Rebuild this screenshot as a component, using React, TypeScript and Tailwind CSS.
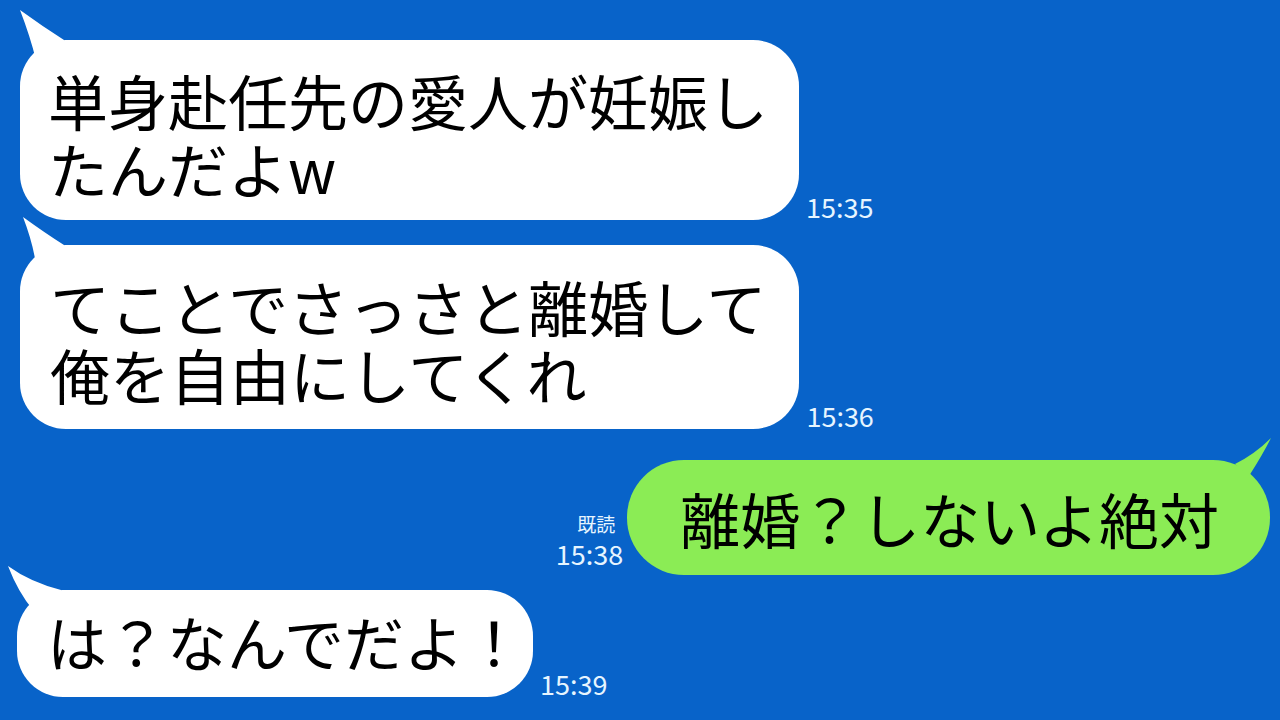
import React from "react";

const FONT = { fontFamily: '"Noto Sans CJK JP", "Noto Sans", sans-serif' };

function LeftTail({ tx, ty }: { tx: number; ty: number }) {
  return (
    <svg
      className="absolute left-0 top-0"
      width="1"
      height="1"
      style={{ overflow: "visible" }}
    >
      <path
        d={`M ${tx} ${ty} Q ${tx + 10} ${ty + 26} 16 20 L 46 6 L 44 0 Q ${tx + 22} ${ty + 16} ${tx} ${ty} Z`}
        fill="#ffffff"
      />
    </svg>
  );
}

function LeftBubble({
  lines,
  time,
  tail,
  className,
  pad,
}: {
  lines: string[];
  time: string;
  tail: [number, number];
  className: string;
  pad: string;
}) {
  return (
    <div className={`flex items-end ${className}`}>
      <div className={`relative bg-white rounded-[46px] ${pad}`}>
        <LeftTail tx={tail[0]} ty={tail[1]} />
        <div className="relative text-[60px] leading-[68px] text-black whitespace-nowrap">
          {lines.map((l, i) => (
            <div key={i}>{l}</div>
          ))}
        </div>
      </div>
      <div className="ml-[7px] mb-[-2px] text-[27px] leading-[30px] text-[#e6f5ff] whitespace-nowrap">
        {time}
      </div>
    </div>
  );
}

export default function App() {
  return (
    <div
      className="w-[1280px] h-[720px] overflow-hidden bg-[#0863c9] flex flex-col"
      style={FONT}
    >
      <LeftBubble
        className="mt-[40px] pl-[20px]"
        pad="pl-[28px] pr-[31px] pt-[26px] pb-[18px]"
        lines={["単身赴任先の愛人が妊娠し", "たんだよw"]}
        time="15:35"
        tail={[0, -30]}
      />
      <LeftBubble
        className="mt-[25px] pl-[20px]"
        pad="pl-[30px] pr-[33px] pt-[27px] pb-[21px]"
        lines={["てことでさっさと離婚して", "俺を自由にしてくれ"]}
        time="15:36"
        tail={[3, -28]}
      />
      <div className="mt-[31px] flex items-end justify-end pr-[10px]">
        <div className="flex flex-col items-end mr-[4px] mb-[6px] text-[#e6f5ff]">
          <div className="text-[19px] leading-[22px] mr-[8px]">既読</div>
          <div className="text-[27px] leading-[30px] mt-[4px]">15:38</div>
        </div>
        <div className="relative bg-[#8bec55] rounded-[57px] pl-[53px] pr-[51px] h-[115px] flex items-center">
          <svg
            className="absolute right-0 top-0"
            width="1"
            height="1"
            style={{ overflow: "visible" }}
          >
            <path
              d="M 2 -22 Q -14 -6 -34 4 L -20 16 Q -6 -6 2 -22 Z"
              fill="#8bec55"
            />
          </svg>
          <div className="relative text-[60px] leading-[68px] text-black whitespace-nowrap">
            離婚？しないよ絶対
          </div>
        </div>
      </div>
      <LeftBubble
        className="mt-[15px] pl-[17px]"
        pad="pl-[30px] pr-[9px] pt-[17px] pb-[22px]"
        lines={["は？なんでだよ！"]}
        time="15:39"
        tail={[-9, -24]}
      />
    </div>
  );
}
